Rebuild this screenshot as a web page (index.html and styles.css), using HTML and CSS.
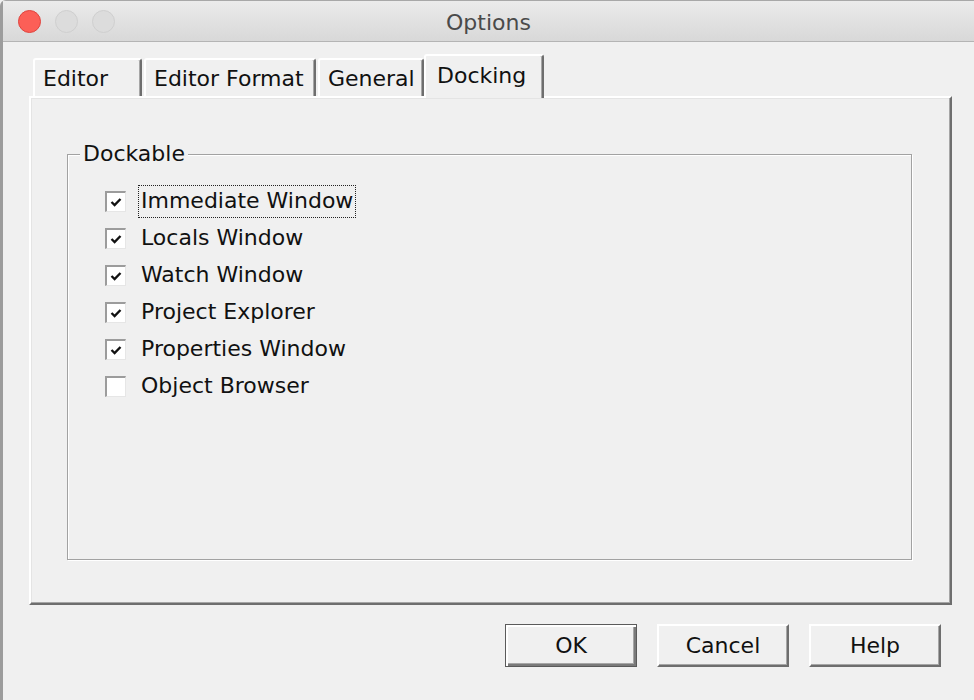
FILE: index.html
```
<!DOCTYPE html>
<html>
<head>
<meta charset="utf-8">
<title>Options</title>
<link rel="stylesheet" href="styles.css">
</head>
<body>
<div class="window">
  <div class="titlebar">
    <div class="lights">
      <span class="light red"></span>
      <span class="light off"></span>
      <span class="light off"></span>
    </div>
    <div class="title">Options</div>
    <div class="spacer"></div>
  </div>
  <div class="content">
    <div class="tabs">
      <div class="tab tab-editor">Editor</div>
      <div class="tab tab-format">Editor Format</div>
      <div class="tab tab-general">General</div>
      <div class="tab tab-docking active">Docking</div>
    </div>
    <div class="panel">
      <fieldset class="group">
        <legend>Dockable</legend>
        <ul class="checks">
          <li class="check"><span class="box on"><svg viewBox="0 0 12 12"><polyline points="1.5,6 4.6,9 10.5,3"/></svg></span><span class="label focus">Immediate Window</span></li>
          <li class="check"><span class="box on"><svg viewBox="0 0 12 12"><polyline points="1.5,6 4.6,9 10.5,3"/></svg></span><span class="label">Locals Window</span></li>
          <li class="check"><span class="box on"><svg viewBox="0 0 12 12"><polyline points="1.5,6 4.6,9 10.5,3"/></svg></span><span class="label">Watch Window</span></li>
          <li class="check"><span class="box on"><svg viewBox="0 0 12 12"><polyline points="1.5,6 4.6,9 10.5,3"/></svg></span><span class="label">Project Explorer</span></li>
          <li class="check"><span class="box on"><svg viewBox="0 0 12 12"><polyline points="1.5,6 4.6,9 10.5,3"/></svg></span><span class="label">Properties Window</span></li>
          <li class="check"><span class="box"></span><span class="label">Object Browser</span></li>
        </ul>
      </fieldset>
    </div>
    <div class="buttons">
      <button class="btn default">OK</button>
      <button class="btn">Cancel</button>
      <button class="btn">Help</button>
    </div>
  </div>
</div>
</body>
</html>
```
FILE: styles.css
```
* { box-sizing: border-box; }
html, body { margin: 0; padding: 0; }
body {
  width: 974px;
  height: 700px;
  overflow: hidden;
  background: #f0f0f0;
  font-family: "DejaVu Sans", "Liberation Sans", sans-serif;
  font-size: 22px;
  color: #111;
}
.window {
  height: 700px;
  border-left: 3px solid #9c9c9c;
  border-top: 1px solid #a8a8a8;
  background: #f0f0f0;
  border-top-left-radius: 6px;
}
.titlebar {
  height: 41px;
  display: grid;
  grid-template-columns: 1fr auto 1fr;
  align-items: center;
  background: linear-gradient(#ebebeb, #d8d8d8);
  border-bottom: 1px solid #b4b4b4;
}
.lights {
  display: flex;
  gap: 14px;
  padding-left: 15px;
}
.light {
  width: 23px;
  height: 23px;
  border-radius: 50%;
  display: block;
}
.light.red {
  background: #fc5f57;
  border: 1px solid #e0443e;
}
.light.off {
  background: #dcdcdc;
  border: 1px solid #cfcfcf;
}
.title {
  color: #4a4a4a;
  font-size: 22px;
  padding-top: 2px;
}
.content {
  padding: 12px 22px 0 26px;
}
.tabs {
  display: flex;
  align-items: flex-end;
  height: 42px;
  padding-left: 4px;
  position: relative;
  z-index: 1;
}
.tab {
  height: 38px;
  border-top: 2px solid #fff;
  border-left: 2px solid #fff;
  border-right: 2px solid #6e6e6e;
  box-shadow: inset -1px 0 0 #a6a6a6;
  border-top-left-radius: 3px;
  border-top-right-radius: 3px;
  padding-left: 8px;
  line-height: 37px;
  white-space: nowrap;
  margin-right: 2px;
}
.tab-editor { width: 109px; }
.tab-format { width: 172px; }
.tab-general { width: 106px; margin-right: 0; }
.tab-docking { width: 120px; }
.tab.active {
  height: 44px;
  margin-bottom: -2px;
  background: #f0f0f0;
  padding-left: 11px;
  line-height: 40px;
}
.panel {
  height: 509px;
  border-top: 2px solid #fff;
  border-left: 2px solid #fff;
  border-right: 2px solid #6e6e6e;
  border-bottom: 2px solid #6e6e6e;
  box-shadow: inset -1px -1px 0 #a6a6a6, inset 1px 1px 0 #e4e4e4;
  padding: 43px 38px 0 36px;
}
.group {
  margin: 0;
  height: 419px;
  border: 1px solid #a2a2a2;
  box-shadow: inset 1px 1px 0 #fff, 1px 1px 0 #fff;
  padding: 0;
}
.group legend {
  margin-left: 12px;
  padding: 0 3px;
  line-height: 26px;
  background: #f0f0f0;
  color: #111;
}
.checks {
  list-style: none;
  margin: 16px 0 0 0;
  padding: 0 0 0 37px;
}
.check {
  height: 37px;
  display: flex;
  align-items: center;
}
.box {
  width: 21px;
  height: 21px;
  background: #fff;
  border-top: 2px solid #9c9c9c;
  border-left: 2px solid #9c9c9c;
  border-right: 1px solid #e6e6e6;
  border-bottom: 1px solid #e6e6e6;
  display: flex;
  align-items: center;
  justify-content: center;
  margin-right: 12px;
}
.box svg {
  width: 12px;
  height: 12px;
  flex: none;
  fill: none;
  stroke: #111;
  stroke-width: 2.4;
}
.label {
  padding: 2px 2px 3px 2px;
  border: 1px dotted transparent;
  line-height: 26px;
  white-space: nowrap;
}
.label.focus {
  border-color: #222;
}
.buttons {
  display: flex;
  justify-content: flex-end;
  gap: 20px;
  margin-top: 19px;
  padding-right: 11px;
}
.btn {
  width: 132px;
  height: 43px;
  font-family: "DejaVu Sans", "Liberation Sans", sans-serif;
  font-size: 22px;
  color: #111;
  background: #f0f0f0;
  border-top: 2px solid #fff;
  border-left: 2px solid #fff;
  border-right: 2px solid #6e6e6e;
  border-bottom: 2px solid #6e6e6e;
  box-shadow: inset -1px -1px 0 #a6a6a6;
  border-radius: 0;
  padding: 0;
}
.btn.default {
  border: 1px solid #5a5a5a;
  box-shadow: inset 1px 1px 0 #fff, inset 2px 2px 0 #fff, inset -2px -2px 0 #7a7a7a, inset -3px -3px 0 #a6a6a6;
}
```
